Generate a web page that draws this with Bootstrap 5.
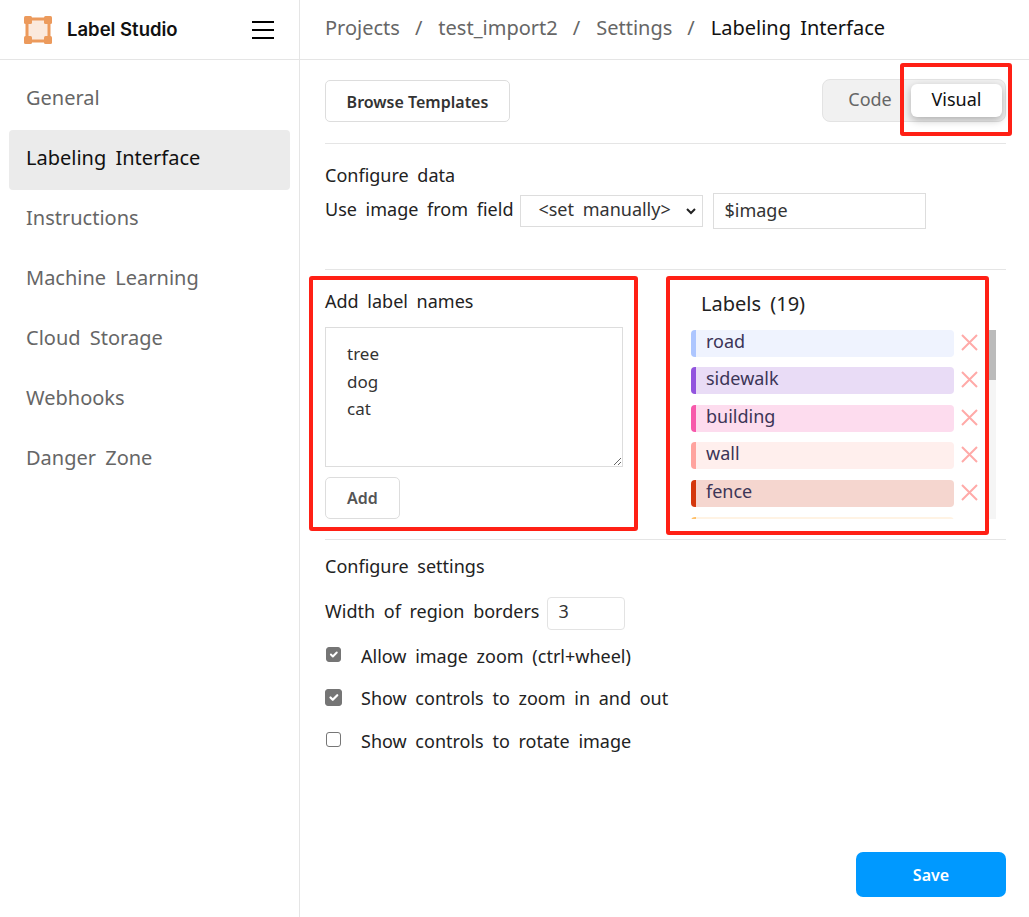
<!DOCTYPE html>
<html lang="en">
<head>
    <meta charset="UTF-8">
    <meta name="viewport" content="width=device-width, initial-scale=1.0">
    <title>Labeling Interface</title>
    <link href="https://cdn.jsdelivr.net/npm/bootstrap@5.3.2/dist/css/bootstrap.min.css" rel="stylesheet">
    <style>
        body {
            font-family: "Noto Sans", "Noto Sans CJK SC", sans-serif;
            font-size: 18px;
            word-spacing: 4px;
            color: #222;
            height: 917px;
            overflow: hidden;
        }
        .app-shell { position: relative; height: 917px; }
        .top-bar { height: 60px; border-bottom: 1px solid #e5e5e5; }
        .brand-box { width: 300px; border-right: 1px solid #e5e5e5; padding: 0 25px 0 24px; }
        .brand-name { font-family: Inter, sans-serif; font-weight: 600; font-size: 18.5px; word-spacing: 0; margin-left: 15px; color: #111; }
        .menu-bars { width: 22px; }
        .menu-bars span { display: block; height: 2px; background: #000; margin-bottom: 6px; }
        .menu-bars span:last-child { margin-bottom: 0; }
        .crumbs { padding: 0 0 4px 25px; font-size: 20px; color: #666; }
        .crumbs i { font-style: normal; margin: 0 16px 0 15px; }
        .crumbs b { font-weight: 400; color: #111; }
        .main-area { height: 857px; }
        .side-nav { width: 300px; border-right: 1px solid #e5e5e5; padding: 10px 9px 0; }
        .side-link { height: 60px; padding: 0 0 4px 17px; font-size: 20px; color: #666; border-radius: 4px; }
        .side-link.is-active { background: #ebebeb; color: #111; }
        .form-pane { width: 681px; margin-left: 25px; position: relative; }
        .head-row { height: 84px; padding-bottom: 2px; border-bottom: 1px solid #e5e5e5; }
        .plain-btn { border: 1px solid #ddd; border-radius: 5px; font-weight: 600; font-size: 16px; word-spacing: 0; color: #333; background: #fff; padding: 0; }
        .browse-btn { width: 185px; height: 42px; padding-top: 3px; }
        .toggle-box { width: 184px; height: 43px; background: #f1f1f1; border: 1px solid #e3e3e3; border-radius: 8px; padding: 4px 3px 4px 6px; }
        .toggle-box span { flex: 1; text-align: center; color: #666; line-height: 31px; }
        .toggle-box .toggle-on { flex: 0 0 91px; background: #fff; color: #111; border-radius: 6px; box-shadow: 0 3px 8px rgba(0,0,0,.28); }
        .data-block { height: 126px; padding-top: 18px; border-bottom: 1px solid #e5e5e5; }
        .data-row { margin-top: 4px; }
        .plain-select { width: 183px; height: 32px; margin-left: 7px; padding: 0 24px 3px 17px; font-size: 18px; word-spacing: 4px; border: 1px solid #ddd; border-radius: 0; color: #333; background-image: url("data:image/svg+xml,%3csvg xmlns='http://www.w3.org/2000/svg' viewBox='0 0 10 10'%3e%3cpath fill='none' stroke='%23222' stroke-width='2' d='M1 3l4 4 4-4'/%3e%3c/svg%3e"); background-size: 10px 10px; background-position: right 6px center; }
        .plain-input { width: 213px; height: 36px; margin-left: 10px; padding: 0 10px 3px; font-size: 18px; border: 1px solid #ddd; border-radius: 0; color: #333; }
        .label-block { height: 270px; border-bottom: 1px solid #e5e5e5; }
        .add-col { width: 298px; padding-top: 18px; }
        .name-area { height: 140px; margin-top: 12px; padding: 12px 21px; font-size: 17px; line-height: 27.5px; border: 1px solid #ddd; border-radius: 0; color: #333; word-spacing: 0; }
        .add-btn { width: 75px; height: 42px; margin-top: 10px; color: #555; }
        .list-col { width: 315px; margin-left: 68px; }
        .list-title { padding: 19px 0 0 10px; height: 60px; font-size: 20px; color: #222; }
        .label-frame { width: 305px; height: 189px; }
        .label-scroll { width: 298px; height: 189px; overflow: hidden; }
        .scroll-track { width: 7px; background: #f5f5f5; }
        .scroll-thumb { height: 50px; background: #bbb; }
        .label-row { height: 27px; margin-bottom: 10.4px; word-spacing: 0; }
        .label-tag { width: 263px; height: 27px; border-left: 5px solid; border-radius: 4px; padding-left: 10px; font-size: 18px; line-height: 22px; color: #3c3557; }
        .label-x { width: 17px; height: 17px; margin: 0 0 2px 7px; }
        .settings-head { margin-top: 13px; }
        .width-row { margin-top: 17px; }
        .width-input { width: 78px; height: 33px; margin-left: 8px; padding: 0 10px 5px; font-size: 18px; border: 1px solid #e3e3e3; border-radius: 4px; color: #333; }
        .check-row { margin: 0; height: 42.5px; padding: 0; }
        .check-row .form-check-input { width: 15px; height: 15px; margin: 0 20px 3px 1px; float: none; border-color: #767676; border-radius: 3px; flex-shrink: 0; }
        .check-row .form-check-input:checked { background-color: #757575; border-color: #757575; }
        .check-row .check-big { width: 17px; height: 17px; margin: 0 19px 3px 0; }
        .check-list { margin-top: 5px; }
        .save-btn { position: absolute; right: 0; top: 792px; width: 150px; height: 45px; border-radius: 7px; background: #0099ff; border: 0; color: #fff; font-weight: 600; font-size: 16px; }
        .mark-box { position: absolute; border: 4px solid #ff2015; border-radius: 3px; pointer-events: none; }
        .mark-toggle { left: 900px; top: 63px; width: 112px; height: 73px; }
        .mark-add { left: 309px; top: 276px; width: 329px; height: 255px; }
        .mark-list { left: 666px; top: 276px; width: 323px; height: 259px; }
    </style>
</head>
<body>
    <div class="app-shell">
        <header class="top-bar d-flex">
            <div class="brand-box d-flex align-items-center">
                <svg width="28" height="28" viewBox="0 0 28 28">
                    <rect x="3" y="3" width="22" height="22" fill="#fbe9dd" stroke="#ec9a5c" stroke-width="3"/>
                    <rect x="0" y="0" width="8" height="8" rx="1.5" fill="#ec9a5c"/>
                    <rect x="20" y="0" width="8" height="8" rx="1.5" fill="#ec9a5c"/>
                    <rect x="0" y="20" width="8" height="8" rx="1.5" fill="#ec9a5c"/>
                    <rect x="20" y="20" width="8" height="8" rx="1.5" fill="#ec9a5c"/>
                </svg>
                <span class="brand-name">Label Studio</span>
                <div class="menu-bars ms-auto"><span></span><span></span><span></span></div>
            </div>
            <div class="crumbs d-flex align-items-center">Projects<i>/</i>test_import2<i>/</i>Settings<i>/</i><b>Labeling Interface</b></div>
        </header>
        <div class="main-area d-flex">
            <nav class="side-nav flex-shrink-0">
                <div class="side-link d-flex align-items-center">General</div>
                <div class="side-link is-active d-flex align-items-center">Labeling Interface</div>
                <div class="side-link d-flex align-items-center">Instructions</div>
                <div class="side-link d-flex align-items-center">Machine Learning</div>
                <div class="side-link d-flex align-items-center">Cloud Storage</div>
                <div class="side-link d-flex align-items-center">Webhooks</div>
                <div class="side-link d-flex align-items-center">Danger Zone</div>
            </nav>
            <main class="form-pane">
                <div class="head-row d-flex justify-content-between align-items-center">
                    <button class="btn plain-btn browse-btn">Browse Templates</button>
                    <div class="toggle-box d-flex"><span>Code</span><span class="toggle-on">Visual</span></div>
                </div>
                <div class="data-block">
                    <div>Configure data</div>
                    <div class="data-row d-flex align-items-center">
                        <span class="mb-1">Use image from field</span>
                        <select class="form-select plain-select"><option>&lt;set manually&gt;</option></select>
                        <input class="form-control plain-input" value="$image">
                    </div>
                </div>
                <div class="label-block d-flex">
                    <div class="add-col">
                        <div>Add label names</div>
                        <textarea class="form-control name-area">tree
dog
cat</textarea>
                        <button class="btn plain-btn add-btn d-block">Add</button>
                    </div>
                    <div class="list-col">
                        <div class="list-title">Labels (19)</div>
                        <div class="label-frame d-flex">
                            <div class="label-scroll" id="labelList"></div>
                            <div class="scroll-track"><div class="scroll-thumb"></div></div>
                        </div>
                    </div>
                </div>
                <div class="settings-head">Configure settings</div>
                <div class="width-row d-flex align-items-center">
                    <span class="mb-1">Width of region borders</span>
                    <input class="form-control width-input" value="3">
                </div>
                <div class="check-list">
                    <div class="form-check check-row d-flex align-items-center"><input class="form-check-input" type="checkbox" checked><label class="form-check-label">Allow image zoom (ctrl+wheel)</label></div>
                    <div class="form-check check-row d-flex align-items-center"><input class="form-check-input check-big" type="checkbox" checked><label class="form-check-label">Show controls to zoom in and out</label></div>
                    <div class="form-check check-row d-flex align-items-center"><input class="form-check-input" type="checkbox"><label class="form-check-label">Show controls to rotate image</label></div>
                </div>
                <button class="btn save-btn">Save</button>
            </main>
        </div>
        <div class="mark-box mark-toggle"></div>
        <div class="mark-box mark-add"></div>
        <div class="mark-box mark-list"></div>
    </div>
    <script src="https://cdn.jsdelivr.net/npm/bootstrap@5.3.2/dist/js/bootstrap.bundle.min.js"></script>
    <script>
        // name, bar colour, tag background
        const labels = [
            ['road', '#adc6ff', '#eff3fe'],
            ['sidewalk', '#9254de', '#e9dcf6'],
            ['building', '#f759ab', '#fddcee'],
            ['wall', '#ffa39e', '#ffefed'],
            ['fence', '#d4380d', '#f5d6cf'],
            ['pole', '#ffc069', '#fff3e4'],
            ['traffic light', '#ffd666', '#fff7e0'],
            ['traffic sign', '#fadb14', '#fef8d0'],
            ['vegetation', '#95de64', '#eaf8e0'],
            ['terrain', '#5cdbd3', '#def8f6'],
            ['sky', '#69c0ff', '#e1f2ff'],
            ['person', '#ff4d4f', '#ffdbdc'],
            ['rider', '#cf1322', '#f5d0d3'],
            ['car', '#1d39c4', '#d2d7f3'],
            ['truck', '#003a8c', '#ccd8e8'],
            ['bus', '#006d75', '#cce2e3'],
            ['train', '#237804', '#d3e4cd'],
            ['motorcycle', '#531dab', '#ddd2ee'],
            ['bicycle', '#c41d7f', '#f3d2e5']
        ];
        const labelList = document.getElementById('labelList');
        labels.forEach(([name, bar, bg]) => {
            const row = document.createElement('div');
            row.className = 'label-row d-flex align-items-center';
            row.innerHTML = `<div class="label-tag" style="border-color:${bar};background:${bg}">${name}</div>
                <svg class="label-x" viewBox="0 0 17 17"><path d="M1 1L16 16M16 1L1 16" stroke="#ffaaa8" stroke-width="2" fill="none"/></svg>`;
            labelList.appendChild(row);
        });
    </script>
</body>
</html>
